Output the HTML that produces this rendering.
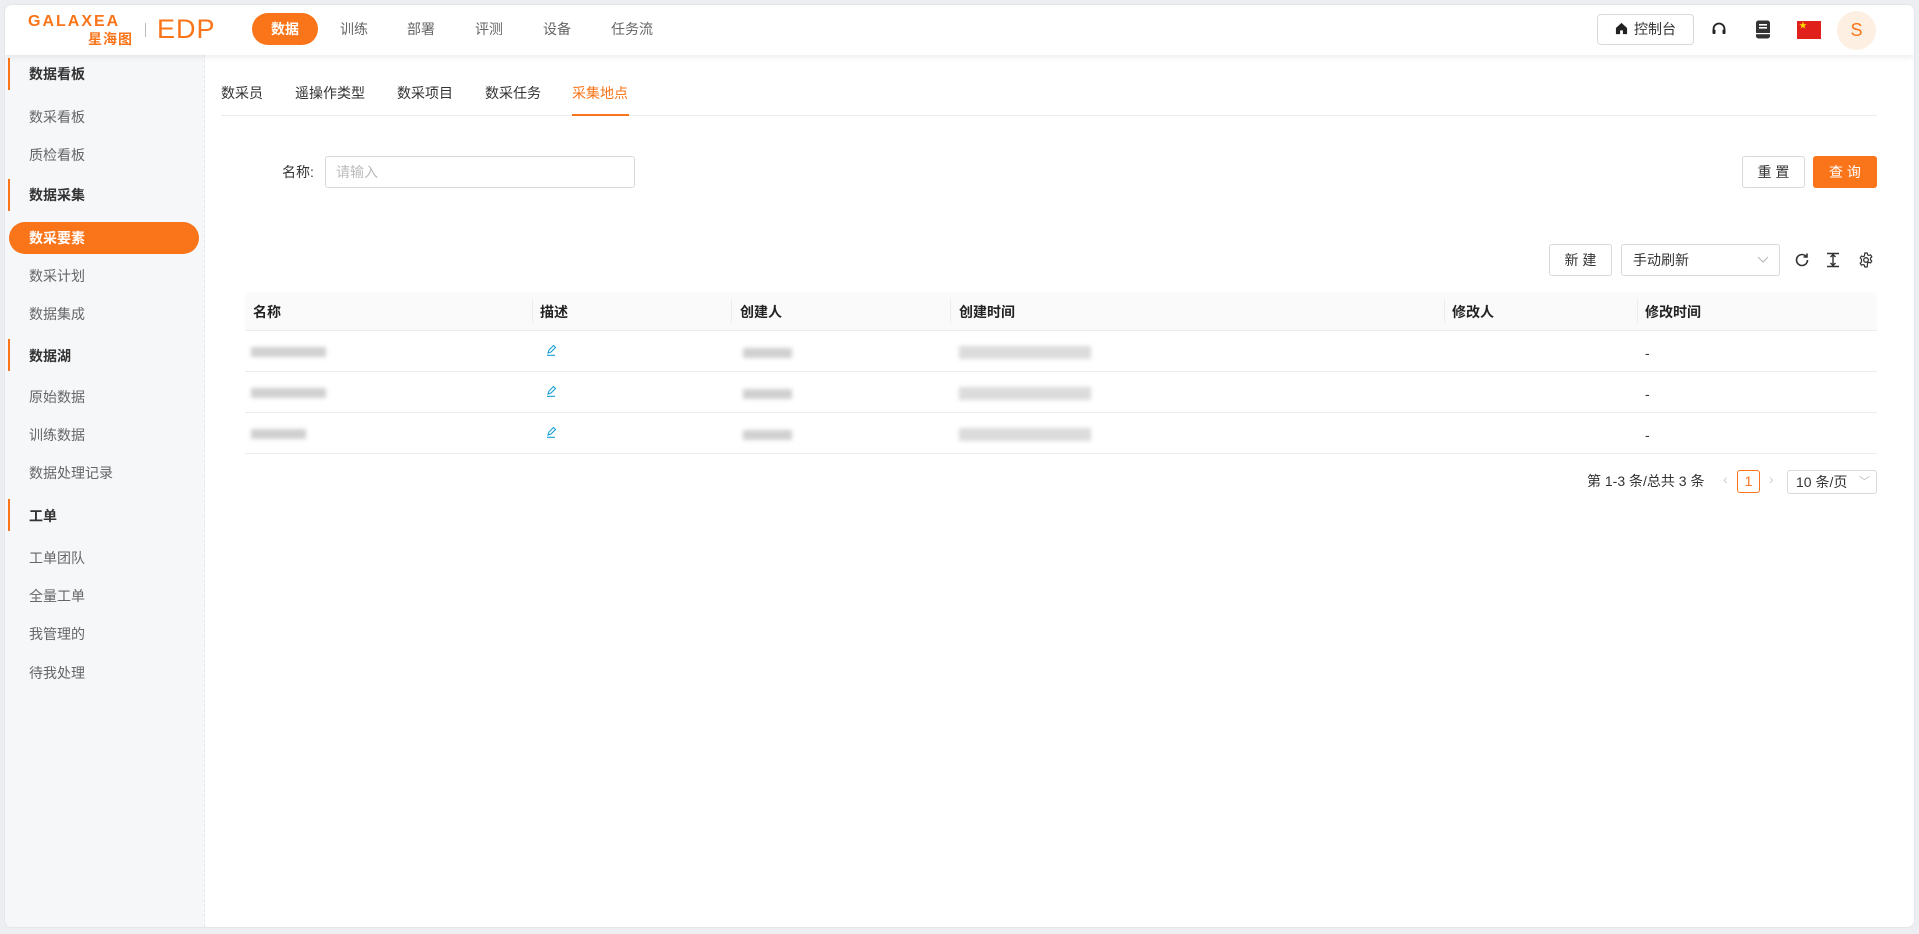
<!DOCTYPE html>
<html><head><meta charset="utf-8"><style>
*{box-sizing:border-box;margin:0;padding:0}
body{width:1919px;height:934px;background:#eceef1;font-family:"Liberation Sans","Noto Sans CJK SC",sans-serif;font-size:14px;color:#333;position:relative;overflow:hidden}
.app{position:absolute;left:4px;top:4px;width:1911px;height:924px;background:#fff;border-radius:8px;overflow:hidden;border:1px solid #e4e6ea}
.abs{position:absolute}
.header{position:absolute;left:0;top:0;width:100%;height:50px;background:#fff;box-shadow:0 2px 6px rgba(0,0,0,.08);z-index:2}
.side{position:absolute;left:0;top:50px;width:200px;bottom:0;background:#f6f7f9;border-right:1px dashed #e6e8eb}
.si{position:absolute;left:24px;font-size:14px;color:#666;line-height:20px}
.sg{position:absolute;left:24px;font-size:14px;color:#333;font-weight:bold;line-height:20px}
.bar{position:absolute;left:3px;width:2px;height:32px;background:#fa7419}
.nav{position:absolute;top:14px;font-size:14px;color:#666}
.th{position:absolute;top:301px;font-weight:bold;color:#222;font-size:14px}
.sep{position:absolute;top:298px;width:1px;height:24px;background:#ececec}
.hl{position:absolute;left:244px;width:1632px;height:1px;background:#ececec}
.blur{position:absolute;background:#bbb;filter:blur(2px);opacity:.7}
.btn{position:absolute;border:1px solid #d9d9d9;border-radius:3px;background:#fff;text-align:center;font-size:14px;color:#333}
</style></head><body>
<div class="app">
<div class="header">
  <div class="abs" style="left:23px;top:8px;font-weight:bold;font-size:16px;color:#fa7419;letter-spacing:2px">GALAXEA</div>
  <div class="abs" style="left:83px;top:24px;font-weight:bold;font-size:14px;color:#fa7419;letter-spacing:1px">星海图</div>
  <div class="abs" style="left:140px;top:18px;width:1px;height:14px;background:#bbb"></div>
  <div class="abs" style="left:152px;top:8px;font-size:27px;color:#fa7419;letter-spacing:1px;line-height:32px">EDP</div>
  <div class="abs" style="left:247px;top:8px;width:66px;height:32px;border-radius:16px;background:#fa7419;color:#fff;text-align:center;line-height:32px;font-weight:bold">数据</div>
  <div class="nav" style="left:335px">训练</div>
  <div class="nav" style="left:402px">部署</div>
  <div class="nav" style="left:470px">评测</div>
  <div class="nav" style="left:538px">设备</div>
  <div class="nav" style="left:606px">任务流</div>
  <div class="btn" style="left:1592px;top:9px;width:97px;height:31px;line-height:29px;border-radius:4px">
    <svg width="13" height="13" viewBox="0 0 14 14" style="vertical-align:-1px;margin-right:6px"><path d="M7 1L1 6.5V13h4.5V9h3v4H13V6.5z" fill="#222"/></svg>控制台</div>
  <svg class="abs" style="left:1706px;top:16px" width="16" height="16" viewBox="0 0 16 16"><path d="M2.5 10V8a5.5 5.5 0 0111 0v2" fill="none" stroke="#222" stroke-width="1.8"/><rect x="1.5" y="8.5" width="3" height="4.5" rx="1" fill="#222"/><rect x="11.5" y="8.5" width="3" height="4.5" rx="1" fill="#222"/></svg>
  <svg class="abs" style="left:1750px;top:15px" width="16" height="19" viewBox="0 0 16 19"><rect x="1" y="0.5" width="14" height="18" rx="2.5" fill="#333"/><rect x="4" y="4" width="8" height="1.6" fill="#fff"/><rect x="4" y="7" width="8" height="1.6" fill="#fff"/><rect x="1" y="13" width="14" height="1.2" fill="#fff"/></svg>
  <div class="abs" style="left:1792px;top:16px;width:24px;height:18px;background:#e0201b"></div>
  <div class="abs" style="left:1794px;top:15px;font-size:8px;color:#ffde00">★</div>
  <div class="abs" style="left:1832px;top:6px;width:39px;height:39px;border-radius:50%;background:#fdf0e3;color:#fa7419;text-align:center;line-height:39px;font-size:18px">S</div>
</div>

<div class="side">
  <div class="bar" style="top:3px"></div><div class="sg" style="top:9px">数据看板</div>
  <div class="si" style="top:52px">数采看板</div>
  <div class="si" style="top:90px">质检看板</div>
  <div class="bar" style="top:124px"></div><div class="sg" style="top:130px">数据采集</div>
  <div class="abs" style="left:4px;top:167px;width:190px;height:32px;border-radius:16px;background:#fa7419;color:#fff;font-weight:bold;line-height:32px;padding-left:20px">数采要素</div>
  <div class="si" style="top:211px">数采计划</div>
  <div class="si" style="top:249px">数据集成</div>
  <div class="bar" style="top:284px"></div><div class="sg" style="top:291px">数据湖</div>
  <div class="si" style="top:332px">原始数据</div>
  <div class="si" style="top:370px">训练数据</div>
  <div class="si" style="top:408px">数据处理记录</div>
  <div class="bar" style="top:444px"></div><div class="sg" style="top:451px">工单</div>
  <div class="si" style="top:493px">工单团队</div>
  <div class="si" style="top:531px">全量工单</div>
  <div class="si" style="top:569px">我管理的</div>
  <div class="si" style="top:608px">待我处理</div>
</div>

<!-- tabs -->
<div class="abs" style="left:216px;top:78px">数采员</div>
<div class="abs" style="left:290px;top:78px">遥操作类型</div>
<div class="abs" style="left:392px;top:78px">数采项目</div>
<div class="abs" style="left:480px;top:78px">数采任务</div>
<div class="abs" style="left:567px;top:78px;color:#fa7419">采集地点</div>
<div class="abs" style="left:216px;top:110px;width:1656px;height:1px;background:#ececec"></div>
<div class="abs" style="left:567px;top:109px;width:57px;height:2px;background:#fa7419"></div>

<!-- form -->
<div class="abs" style="left:277px;top:157px">名称:</div>
<div class="abs" style="left:320px;top:151px;width:310px;height:32px;border:1px solid #d9d9d9;border-radius:3px;color:#bbb;line-height:30px;padding-left:10px">请输入</div>
<div class="btn" style="left:1737px;top:151px;width:63px;height:32px;line-height:30px">重 置</div>
<div class="abs" style="left:1808px;top:151px;width:64px;height:32px;border-radius:3px;background:#fa7419;color:#fff;text-align:center;line-height:32px">查 询</div>

<!-- toolbar -->
<div class="btn" style="left:1544px;top:239px;width:63px;height:32px;line-height:30px">新 建</div>
<div class="btn" style="left:1616px;top:239px;width:159px;height:32px;line-height:30px;text-align:left;padding-left:11px">手动刷新
  <svg class="abs" style="right:10px;top:11px" width="12" height="8" viewBox="0 0 12 8"><path d="M1 1l5 5 5-5" fill="none" stroke="#bbb" stroke-width="1.2"/></svg></div>
<svg class="abs" style="left:1789px;top:247px" width="16" height="16" viewBox="0 0 16 16"><path d="M13.5 8A5.5 5.5 0 118 2.5c1.8 0 3.2.8 4.2 2" fill="none" stroke="#333" stroke-width="1.6"/><path d="M13 1.5v3.5H9.5" fill="none" stroke="#333" stroke-width="1.6"/></svg>
<svg class="abs" style="left:1821px;top:247px" width="14" height="16" viewBox="0 0 14 16"><path d="M1 1.5h12M1 14.5h12M7 2v12M4.5 5L7 2.5 9.5 5M4.5 11L7 13.5 9.5 11" fill="none" stroke="#333" stroke-width="1.4"/></svg>
<svg class="abs" style="left:1853px;top:247px" width="16" height="16" viewBox="0 0 16 16"><circle cx="8" cy="8" r="2.3" fill="none" stroke="#333" stroke-width="1.3"/><path d="M6.8 1h2.4l.4 1.8 1.3.7 1.7-.7 1.2 2-1.3 1.3v1.6l1.3 1.3-1.2 2-1.7-.7-1.3.7L9.2 15H6.8l-.4-1.8-1.3-.7-1.7.7-1.2-2 1.3-1.3V7.3L2.2 6l1.2-2 1.7.7 1.3-.7z" fill="none" stroke="#333" stroke-width="1.2" stroke-linejoin="round"/></svg>

<!-- table -->
<div class="abs" style="left:240px;top:287px;width:1632px;height:38px;background:#fafafa;border-radius:6px 6px 0 0"></div>
<div class="th" style="left:248px;top:297px">名称</div>
<div class="th" style="left:535px;top:297px">描述</div>
<div class="th" style="left:735px;top:297px">创建人</div>
<div class="th" style="left:954px;top:297px">创建时间</div>
<div class="th" style="left:1447px;top:297px">修改人</div>
<div class="th" style="left:1640px;top:297px">修改时间</div>
<div class="sep" style="left:527px;top:294px"></div><div class="sep" style="left:726px;top:294px"></div><div class="sep" style="left:945px;top:294px"></div><div class="sep" style="left:1439px;top:294px"></div><div class="sep" style="left:1632px;top:294px"></div>
<div class="hl" style="left:240px;top:325px"></div>
<div class="hl" style="left:240px;top:366px"></div>
<div class="hl" style="left:240px;top:407px"></div>
<div class="hl" style="left:240px;top:448px"></div>

<div class="blur" style="left:246px;top:342px;width:75px;height:10px"></div>
<div class="blur" style="left:246px;top:383px;width:75px;height:10px"></div>
<div class="blur" style="left:246px;top:424px;width:55px;height:10px"></div>
<div class="blur" style="left:738px;top:343px;width:49px;height:10px"></div>
<div class="blur" style="left:738px;top:384px;width:49px;height:10px"></div>
<div class="blur" style="left:738px;top:425px;width:49px;height:10px"></div>
<div class="blur" style="left:954px;top:341px;width:132px;height:13px;background:#ccc"></div>
<div class="blur" style="left:954px;top:382px;width:132px;height:13px;background:#ccc"></div>
<div class="blur" style="left:954px;top:423px;width:132px;height:13px;background:#ccc"></div>
<svg class="abs" style="left:541px;top:339px" width="12" height="12" viewBox="0 0 12 12"><path d="M2 9l1-3 4.5-4.5 2 2L5 8z M1 11.3h8" fill="none" stroke="#1a9fd6" stroke-width="1.1"/></svg>
<svg class="abs" style="left:541px;top:380px" width="12" height="12" viewBox="0 0 12 12"><path d="M2 9l1-3 4.5-4.5 2 2L5 8z M1 11.3h8" fill="none" stroke="#1a9fd6" stroke-width="1.1"/></svg>
<svg class="abs" style="left:541px;top:421px" width="12" height="12" viewBox="0 0 12 12"><path d="M2 9l1-3 4.5-4.5 2 2L5 8z M1 11.3h8" fill="none" stroke="#1a9fd6" stroke-width="1.1"/></svg>
<div class="abs" style="left:1640px;top:340px">-</div>
<div class="abs" style="left:1640px;top:381px">-</div>
<div class="abs" style="left:1640px;top:422px">-</div>

<!-- pagination -->
<div class="abs" style="left:1582px;top:466px;font-size:14px">第 1-3 条/总共 3 条</div>
<div class="abs" style="left:1718px;top:466px;color:#ccc">‹</div>
<div class="abs" style="left:1732px;top:465px;width:23px;height:23px;border:1px solid #fa7419;border-radius:3px;color:#fa7419;text-align:center;line-height:21px">1</div>
<div class="abs" style="left:1764px;top:466px;color:#ccc">›</div>
<div class="btn" style="left:1782px;top:465px;width:90px;height:24px;line-height:22px;text-align:left;padding-left:8px">10 条/页<span style="position:absolute;right:6px;color:#bbb;font-size:11px">﹀</span></div>
</div>
</body></html>
